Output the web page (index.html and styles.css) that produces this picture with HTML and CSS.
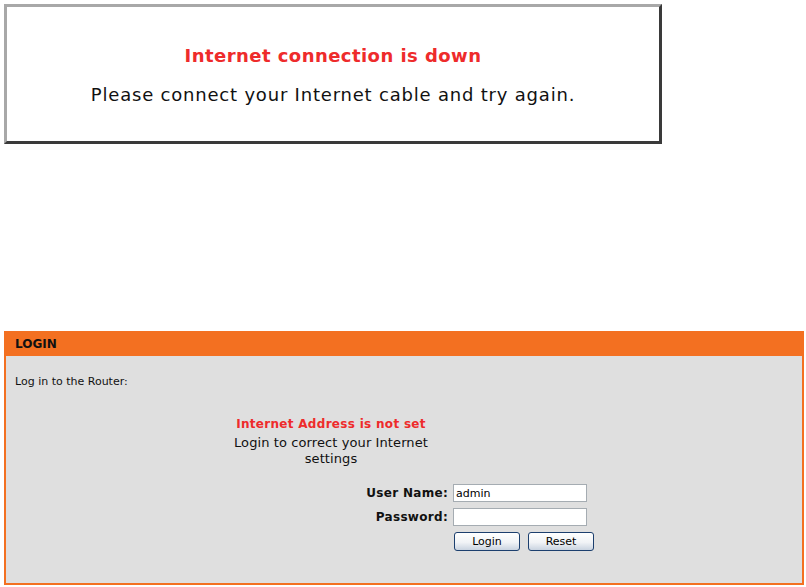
FILE: index.html
```html
<!DOCTYPE html>
<html>
<head>
<meta charset="utf-8">
<link rel="stylesheet" href="styles.css">
</head>
<body>
<div class="notice">
  <div class="notice-title">Internet connection is down</div>
  <div class="notice-text">Please connect your Internet cable and try again.</div>
</div>
<div class="panel">
  <div class="panel-head">LOGIN</div>
  <div class="panel-body">
    <div class="intro">Log in to the Router:</div>
    <div class="msg">
      <div class="msg-title">Internet Address is not set</div>
      <div class="msg-text">Login to correct your Internet settings</div>
    </div>
    <form class="login-form">
      <label class="lbl">User Name:</label>
      <input class="field" type="text" value="admin">
      <label class="lbl">Password:</label>
      <input class="field" type="password">
      <span></span>
      <div class="buttons">
        <button type="button" class="btn">Login</button>
        <button type="button" class="btn">Reset</button>
      </div>
    </form>
  </div>
</div>
</body>
</html>
```
FILE: styles.css
```css
html, body {
  margin: 0;
  padding: 0;
  background: #ffffff;
}
body {
  padding: 4px;
  font-family: "DejaVu Sans", Verdana, sans-serif;
}
.notice {
  box-sizing: border-box;
  width: 658px;
  height: 140px;
  border-style: solid;
  border-width: 3px;
  border-color: #a8a8a8 #3a3a3a #3a3a3a #a8a8a8;
  background: #fff;
  text-align: center;
  padding-top: 37px;
}
.notice-title {
  color: #ee2b2b;
  font-weight: bold;
  font-size: 18px;
  letter-spacing: 0.45px;
  line-height: 24px;
}
.notice-text {
  color: #111;
  font-size: 18px;
  letter-spacing: 0.8px;
  line-height: 24px;
  margin-top: 15px;
}
.panel {
  margin-top: 187px;
  width: 800px;
  box-sizing: border-box;
  border: 2px solid #f37021;
  border-top: 0;
}
.panel-head {
  background: #f37021;
  height: 25px;
  line-height: 26px;
  padding-left: 9px;
  font-size: 12px;
  font-weight: bold;
  color: #111;
}
.panel-body {
  background: #dfdfdf;
  padding: 19px 9px 0;
  font-size: 11px;
  color: #111;
  height: 227px;
  box-sizing: border-box;
}
.intro {
  line-height: 14px;
}
.msg {
  width: 204px;
  margin-left: 214px;
  margin-top: 27px;
  text-align: center;
}
.msg-title {
  color: #ee2b2b;
  font-weight: bold;
  font-size: 12px;
  letter-spacing: 0.3px;
  line-height: 16px;
}
.msg-text {
  font-size: 13px;
  letter-spacing: 0.1px;
  line-height: 16px;
  margin-top: 3px;
}
.login-form {
  display: grid;
  grid-template-columns: 433px 134px;
  column-gap: 5px;
  row-gap: 6px;
  align-items: center;
  margin-top: 17px;
}
.lbl {
  text-align: right;
  font-weight: bold;
  font-size: 12px;
  letter-spacing: 0.3px;
}
.field {
  box-sizing: border-box;
  width: 134px;
  height: 18px;
  border: 1px solid #a5acb2;
  background: #fff;
  padding: 0 2px;
  margin: 0;
  font-family: "DejaVu Sans", Verdana, sans-serif;
  font-size: 11px;
}
.buttons {
  display: flex;
  gap: 8px;
  padding-left: 1px;
}
.btn {
  box-sizing: border-box;
  flex: 0 0 66px;
  width: 66px;
  height: 19px;
  border: 1px solid #1c3f6e;
  border-radius: 3px;
  background: linear-gradient(#ffffff, #f1f3f6 55%, #c9d3e0);
  font-family: "DejaVu Sans", Verdana, sans-serif;
  font-size: 11px;
  padding: 0;
  color: #000;
}
```
